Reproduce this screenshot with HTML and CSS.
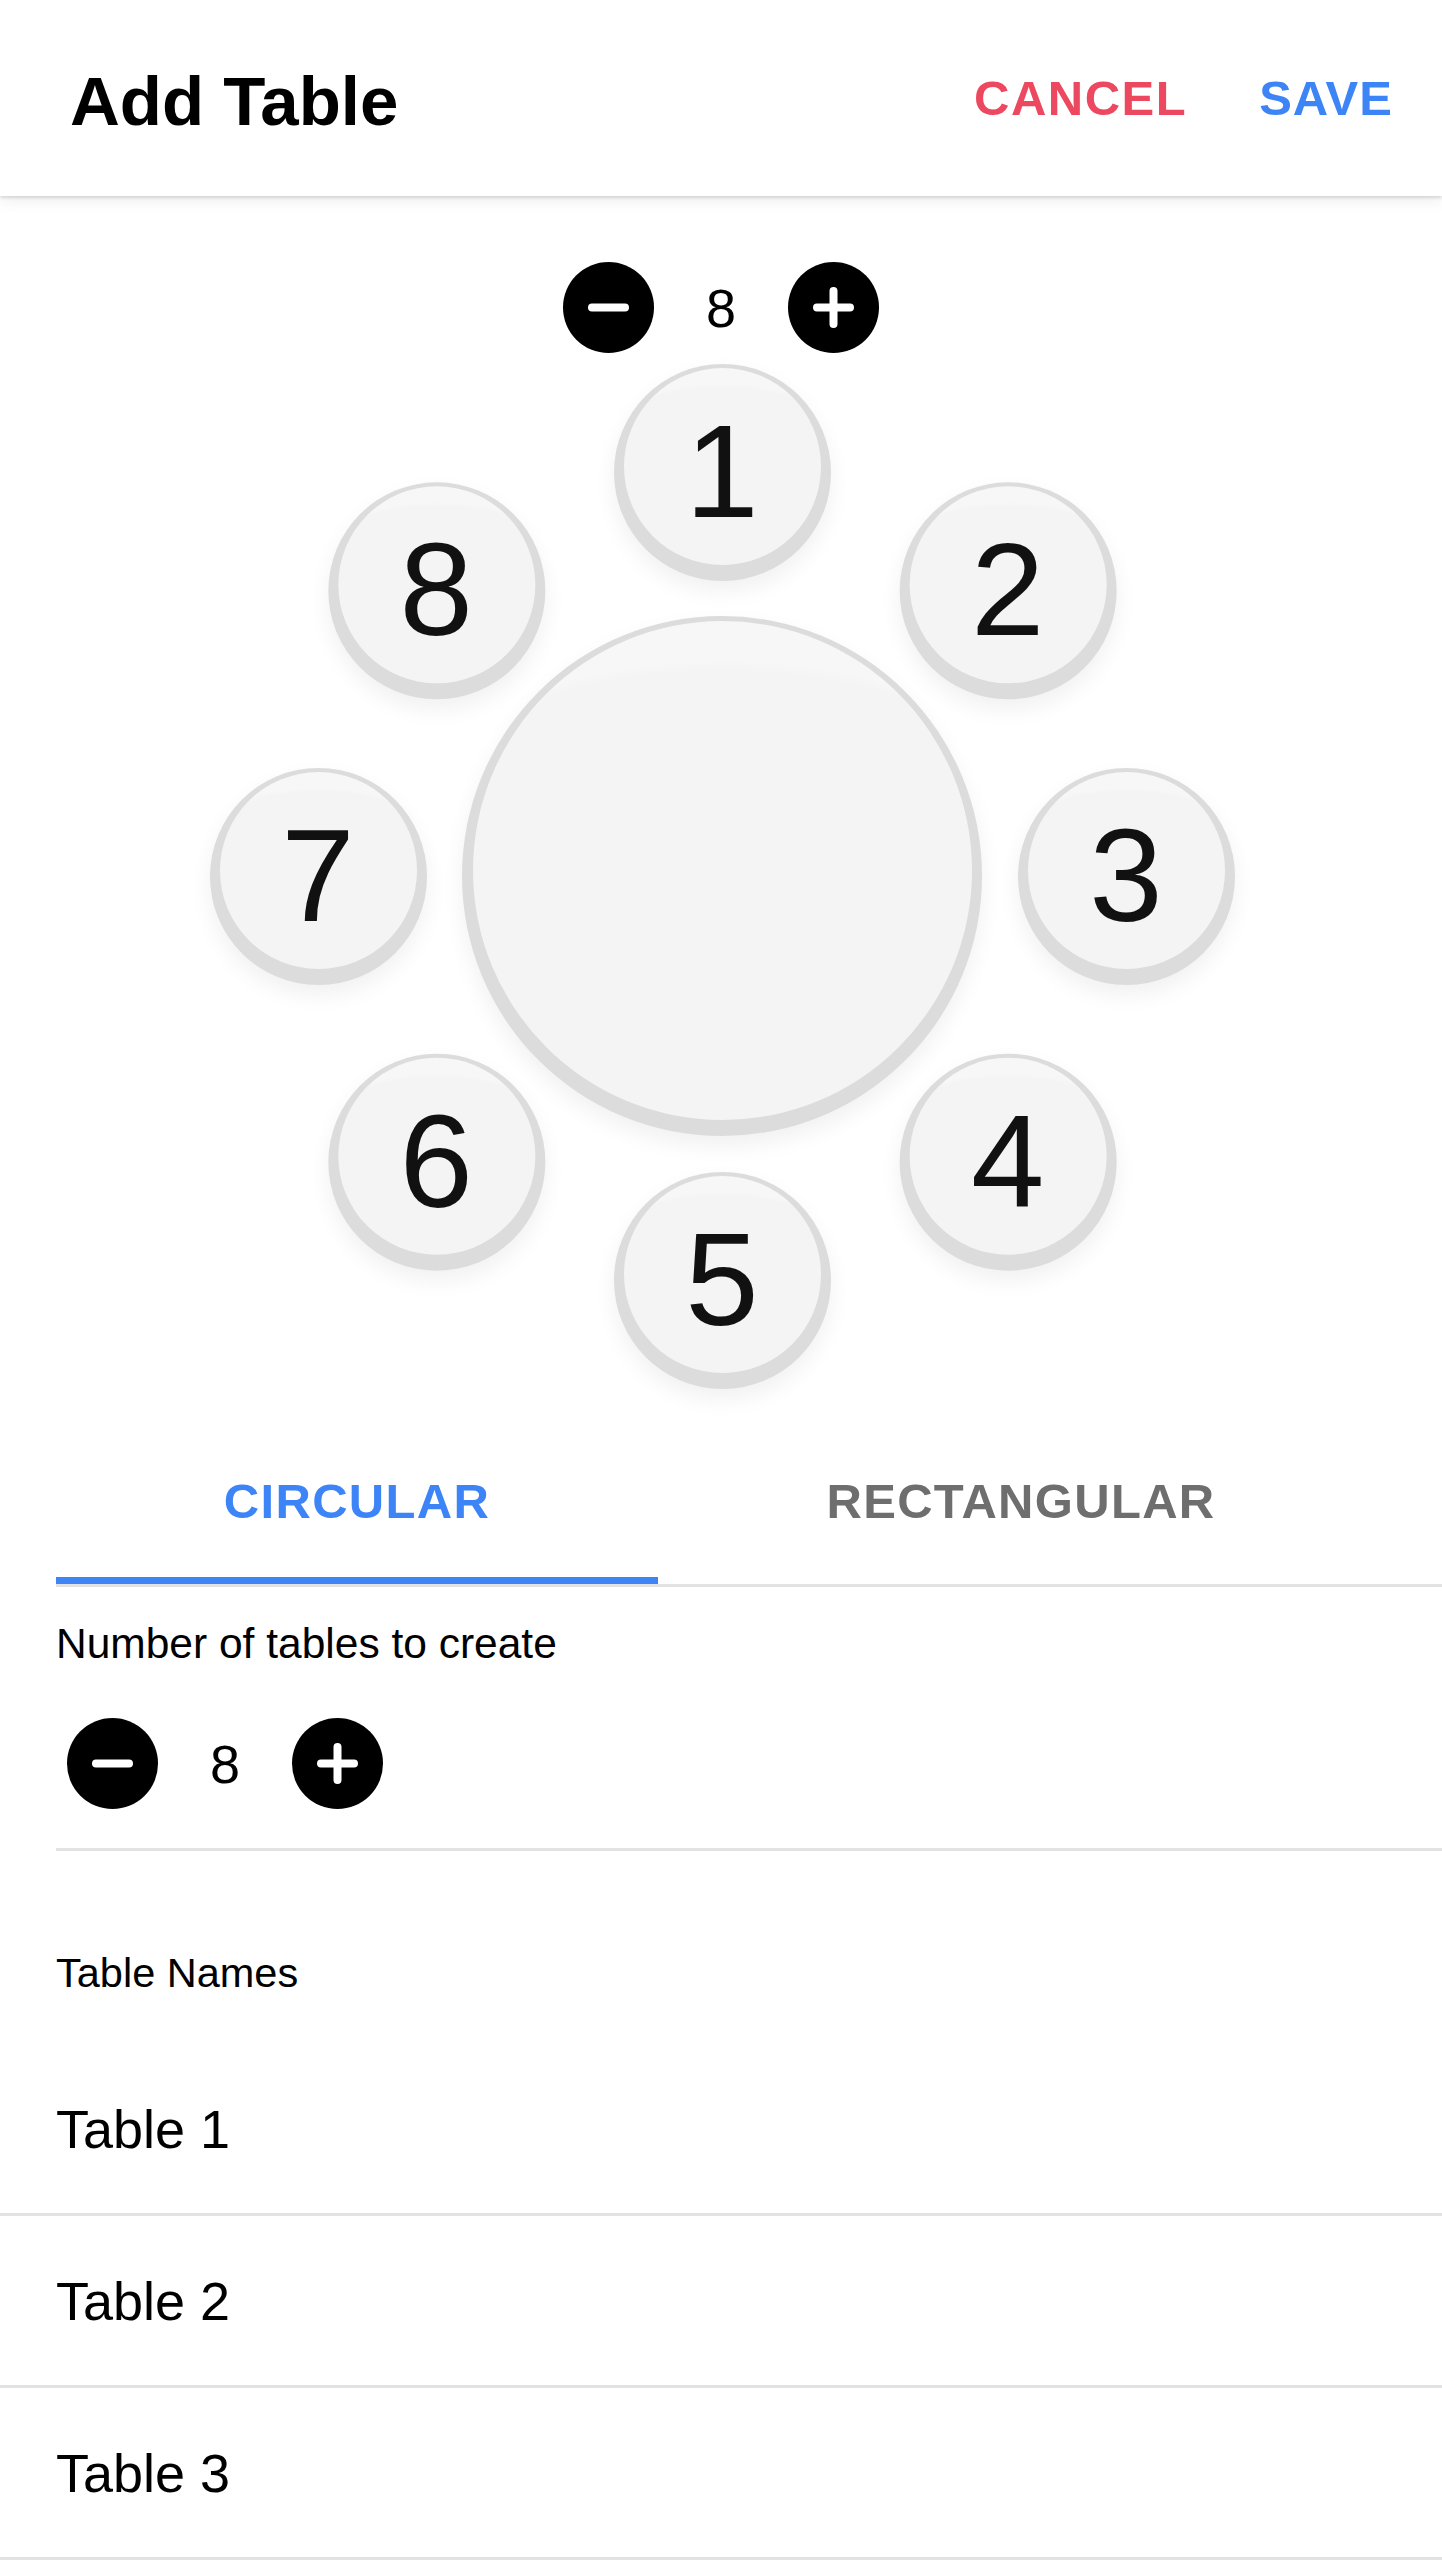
FILE: index.html
```html
<!DOCTYPE html>
<html lang="en">
<head>
    <meta charset="UTF-8">
    <meta name="viewport" content="width=device-width, initial-scale=1.0">
    <title>Add Table</title>
    <link rel="stylesheet" href="styles.css">
</head>
<body>
    <header class="topbar">
        <h1 class="title">Add Table</h1>
        <div class="actions">
            <button class="action cancel">CANCEL</button>
            <button class="action save">SAVE</button>
        </div>
    </header>

    <main>
        <div class="stepper stepper-center">
            <svg class="step-icon" viewBox="0 0 91 91"><circle cx="45.5" cy="45.5" r="45.5"/><path d="M29 45.5h33" /></svg>
            <span class="step-value">8</span>
            <svg class="step-icon" viewBox="0 0 91 91"><circle cx="45.5" cy="45.5" r="45.5"/><path d="M29 45.5h33M45.5 29v33" /></svg>
        </div>

        <div class="floor">
            <div class="table-top"><div class="face"></div></div>
            <div class="seat s1"><div class="face"><span>1</span></div></div>
            <div class="seat s2"><div class="face"><span>2</span></div></div>
            <div class="seat s3"><div class="face"><span>3</span></div></div>
            <div class="seat s4"><div class="face"><span>4</span></div></div>
            <div class="seat s5"><div class="face"><span>5</span></div></div>
            <div class="seat s6"><div class="face"><span>6</span></div></div>
            <div class="seat s7"><div class="face"><span>7</span></div></div>
            <div class="seat s8"><div class="face"><span>8</span></div></div>
        </div>

        <nav class="tabs">
            <div class="tab active">CIRCULAR</div>
            <div class="tab">RECTANGULAR</div>
        </nav>

        <section class="count">
            <p class="label">Number of tables to create</p>
            <div class="stepper stepper-left">
                <svg class="step-icon" viewBox="0 0 91 91"><circle cx="45.5" cy="45.5" r="45.5"/><path d="M29 45.5h33" /></svg>
                <span class="step-value">8</span>
                <svg class="step-icon" viewBox="0 0 91 91"><circle cx="45.5" cy="45.5" r="45.5"/><path d="M29 45.5h33M45.5 29v33" /></svg>
            </div>
        </section>

        <p class="names-label">Table Names</p>
        <ul class="names">
            <li>Table 1</li>
            <li>Table 2</li>
            <li>Table 3</li>
        </ul>
    </main>
</body>
</html>
```

FILE: styles.css
```css
body {
    margin: 0;
    background-color: #fff;
    font-family: "Liberation Sans", Arial, sans-serif;
    color: #000;
}
.topbar {
    position: relative;
    z-index: 2;
    height: 196px;
    box-sizing: border-box;
    padding: 6px 49px 0 70px;
    display: flex;
    align-items: center;
    justify-content: space-between;
    background-color: #fff;
    box-shadow: 0 2px 3px rgba(0,0,0,0.13), 0 6px 14px rgba(0,0,0,0.06);
}
.title {
    margin: 0;
    font-size: 69px;
    font-weight: bold;
}
.actions {
    display: flex;
    gap: 72px;
    margin-top: -6px;
}
.action {
    border: none;
    background: none;
    padding: 0;
    font-family: inherit;
    font-size: 49px;
    font-weight: bold;
    letter-spacing: 1.5px;
    cursor: pointer;
}
.cancel {
    color: #ec4860;
}
.save {
    color: #3d85f7;
    letter-spacing: 1px;
}

/* steppers */
.stepper {
    display: flex;
    align-items: center;
    gap: 52px;
}
.stepper-center {
    justify-content: center;
    margin-top: 66px;
}
.stepper-left {
    margin-left: 11px;
}
.step-icon {
    width: 91px;
    height: 91px;
    display: block;
}
.step-icon circle {
    fill: #000;
}
.step-icon path {
    stroke: #fff;
    stroke-width: 8;
    stroke-linecap: round;
    fill: none;
}
.step-value {
    font-size: 54px;
    line-height: 1;
    width: 30px;
    text-align: center;
}

/* seating plan */
.floor {
    position: relative;
    height: 1062px;
}
.table-top,
.seat {
    position: absolute;
    box-sizing: border-box;
    display: flex;
    justify-content: center;
    border-radius: 50%;
    background-color: #dcdcdc;
    box-shadow: 0 10px 22px rgba(0,0,0,0.06);
}
.face {
    box-sizing: border-box;
    border-radius: 50%;
    background: radial-gradient(ellipse 82% 52% at 50% 60%, #f4f4f4 96%, #f7f7f7 100%);
    display: flex;
    align-items: center;
    justify-content: center;
}
.table-top {
    left: 462px;
    top: 263px;
    width: 520px;
    height: 520px;
    padding-top: 5px;
}
.table-top .face {
    width: 499px;
    height: 499px;
}
.seat {
    left: 613.5px;
    top: 414.5px;
    width: 217px;
    height: 217px;
    padding-top: 4px;
    transform: rotate(var(--a)) translateY(-404px) rotate(calc(-1 * var(--a)));
}
.seat .face {
    width: 197px;
    height: 197px;
    padding-top: 12px;
    font-size: 132px;
    line-height: 1;
    color: #111;
}
.s1 { --a: 0deg; }
.s2 { --a: 45deg; }
.s3 { --a: 90deg; }
.s4 { --a: 135deg; }
.s5 { --a: 180deg; }
.s6 { --a: 225deg; }
.s7 { --a: 270deg; }
.s8 { --a: 315deg; }

/* tabs */
.tabs {
    display: flex;
    margin-left: 56px;
    border-bottom: 3px solid #e2e2e2;
}
.tab {
    width: 602px;
    padding: 58px 0 48px;
    text-align: center;
    font-size: 49px;
    line-height: 56px;
    font-weight: bold;
    letter-spacing: 1.3px;
    color: #6e6e6e;
    border-bottom: 7px solid transparent;
}
.tab + .tab {
    width: 726px;
}
.tab.active {
    color: #3d85f7;
    border-bottom-color: #3d85f7;
}

/* number of tables */
.count {
    margin-left: 56px;
    padding: 33px 0 39px;
    border-bottom: 3px solid #e2e2e2;
}
.label {
    margin: 0 0 50px;
    font-size: 42.5px;
    line-height: 48px;
}
.names-label {
    margin: 99px 56px 48px;
    font-size: 41.5px;
    line-height: 46px;
}
.names {
    list-style: none;
    margin: 0;
    padding: 0;
}
.names li {
    height: 169px;
    display: flex;
    align-items: center;
    padding-left: 56px;
    font-size: 54px;
    border-bottom: 3px solid #e2e2e2;
}
```
